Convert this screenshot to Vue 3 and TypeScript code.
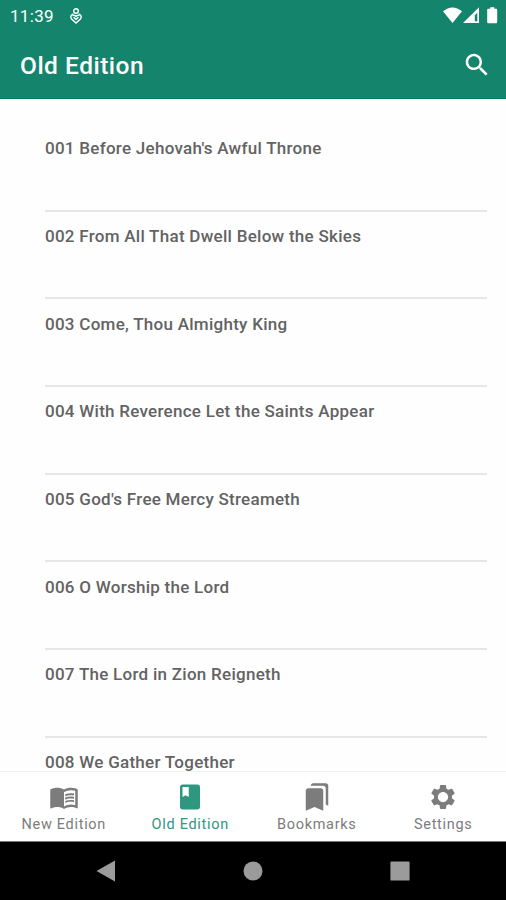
<script setup lang="ts">
import { ref } from 'vue'

interface Hymn {
  number: string
  title: string
}

interface Tab {
  id: string
  label: string
  paths: string[]
}

const hymns: Hymn[] = [
  { number: '001', title: "Before Jehovah's Awful Throne" },
  { number: '002', title: 'From All That Dwell Below the Skies' },
  { number: '003', title: 'Come, Thou Almighty King' },
  { number: '004', title: 'With Reverence Let the Saints Appear' },
  { number: '005', title: "God's Free Mercy Streameth" },
  { number: '006', title: 'O Worship the Lord' },
  { number: '007', title: 'The Lord in Zion Reigneth' },
  { number: '008', title: 'We Gather Together' },
]

const tabs: Tab[] = [
  {
    id: 'new',
    label: 'New Edition',
    paths: [
      'M21 5c-1.11-.35-2.33-.5-3.5-.5-1.95 0-4.05.4-5.5 1.5-1.45-1.1-3.55-1.5-5.5-1.5S2.45 4.9 1 6v14.65c0 .25.25.5.5.5.1 0 .15-.05.25-.05C3.1 20.45 5.05 20 6.5 20c1.95 0 4.05.4 5.5 1.5 1.35-.85 3.8-1.5 5.5-1.5 1.65 0 3.35.3 4.75 1.05.1.05.15.05.25.05.25 0 .5-.25.5-.5V6c-.6-.45-1.25-.75-2-1zm0 13.5c-1.1-.35-2.3-.5-3.5-.5-1.7 0-4.15.65-5.5 1.5V8c1.35-.85 3.8-1.5 5.5-1.5 1.2 0 2.4.15 3.5.5v11.5z',
      'M17.5 10.5c.88 0 1.73.09 2.5.26V9.24c-.79-.15-1.64-.24-2.5-.24-1.7 0-3.24.29-4.5.83v1.66c1.13-.64 2.7-.99 4.5-.99zM13 12.49v1.66c1.13-.64 2.7-.99 4.5-.99.88 0 1.73.09 2.5.26V11.9c-.79-.15-1.64-.24-2.5-.24-1.7 0-3.24.3-4.5.83zM17.5 14.33c-1.7 0-3.24.29-4.5.83v1.66c1.13-.64 2.7-.99 4.5-.99.88 0 1.73.09 2.5.26v-1.52c-.79-.16-1.64-.24-2.5-.24z',
    ],
  },
  {
    id: 'old',
    label: 'Old Edition',
    paths: [
      'M18 2H6C4.9 2 4 2.9 4 4v16c0 1.1.9 2 2 2h12c1.1 0 2-.9 2-2V4c0-1.1-.9-2-2-2zM6 4h5v8l-2.5-1.5L6 12V4z',
    ],
  },
  {
    id: 'bookmarks',
    label: 'Bookmarks',
    paths: ['M19 18l2 1V3c0-1.1-.9-2-2-2H8.99C7.89 1 7 1.9 7 3h10c1.1 0 2 .9 2 2v13zM15 5H5c-1.1 0-2 .9-2 2v16l7-3 7 3V7c0-1.1-.9-2-2-2z'],
  },
  {
    id: 'settings',
    label: 'Settings',
    paths: [
      'M19.14 12.94c.04-.3.06-.61.06-.94 0-.32-.02-.64-.07-.94l2.03-1.58c.18-.14.23-.41.12-.61l-1.92-3.32c-.12-.22-.37-.29-.59-.22l-2.39.96c-.5-.38-1.03-.7-1.62-.94l-.36-2.54c-.04-.24-.24-.41-.48-.41h-3.84c-.24 0-.43.17-.47.41l-.36 2.54c-.59.24-1.13.57-1.62.94l-2.39-.96c-.22-.08-.47 0-.59.22L2.74 8.87c-.12.21-.08.47.12.61l2.03 1.58c-.05.3-.09.63-.09.94s.02.64.07.94l-2.03 1.58c-.18.14-.23.41-.12.61l1.92 3.32c.12.22.37.29.59.22l2.39-.96c.5.38 1.03.7 1.62.94l.36 2.54c.05.24.24.41.48.41h3.84c.24 0 .44-.17.47-.41l.36-2.54c.59-.24 1.13-.56 1.62-.94l2.39.96c.22.08.47 0 .59-.22l1.92-3.32c.12-.22.07-.47-.12-.61l-2.01-1.58zM12 16.1c-2.26 0-4.1-1.84-4.1-4.1s1.84-4.1 4.1-4.1 4.1 1.84 4.1 4.1-1.84 4.1-4.1 4.1z',
    ],
  },
]

const activeTab = ref('old')
</script>

<template>
  <div class="screen">
    <header class="header">
      <div class="status">
        <span class="clock">11:39</span>
        <svg class="notice" viewBox="0 0 12 16" fill="none" stroke="#fff" stroke-width="1.4">
          <circle cx="6" cy="3" r="2.3" />
          <path d="M3.4 5.9C.8 6.5.2 9.3 1.6 11L6 15l4.4-4C11.8 9.3 11.2 6.5 8.6 5.9" />
          <path d="M2.4 7.6Q4.6 6.4 6 8.4Q7.4 6.4 9.6 7.6M3.6 9.2 6 11.4l2.4-2.2" />
        </svg>
        <svg class="signals" viewBox="0 0 56 18" fill="#fff">
          <path d="M0 4.3Q9.5-3.3 19 4.3L9.5 16z" />
          <path fill-rule="evenodd" d="M36 .3V16H20zM34.3 5.8l-2.5 2.4V14.2h2.5z" />
          <path d="M47.2.2h4.2v1.6h1.8q1 0 1 1V15q0 1.2-1 1.2h-8q-1 0-1-1.2V2.8q0-1 1-1h2z" />
        </svg>
      </div>
      <div class="toolbar">
        <h1 class="title">Old Edition</h1>
        <button class="search" aria-label="Search">
          <svg viewBox="0 0 24 24" fill="#fff">
            <path d="M15.5 14h-.79l-.28-.27C15.41 12.59 16 11.11 16 9.5 16 5.91 13.09 3 9.5 3S3 5.91 3 9.5 5.91 16 9.5 16c1.61 0 3.09-.59 4.23-1.57l.27.28v.79l5 4.99L20.49 19l-4.99-5zm-6 0C7.01 14 5 11.99 5 9.5S7.01 5 9.5 5 14 7.01 14 9.5 11.99 14 9.5 14z" />
          </svg>
        </button>
      </div>
    </header>

    <main class="list">
      <div v-for="hymn in hymns" :key="hymn.number" class="row">
        {{ hymn.number }} {{ hymn.title }}
      </div>
    </main>

    <nav class="tabs">
      <button
        v-for="tab in tabs"
        :key="tab.id"
        class="tab"
        :class="{ active: tab.id === activeTab }"
        @click="activeTab = tab.id"
      >
        <svg class="tab-icon" viewBox="0 0 24 24" fill="currentColor">
          <path v-for="d in tab.paths" :key="d" :d="d" />
        </svg>
        <span class="tab-label">{{ tab.label }}</span>
      </button>
    </nav>

    <footer class="system">
      <svg viewBox="0 0 20 22"><path d="M19 .5v21L.5 11z" /></svg>
      <svg viewBox="0 0 20 22"><circle cx="10" cy="11" r="9.5" /></svg>
      <svg viewBox="0 0 20 22"><rect x=".4" y="1.4" width="19.2" height="19.2" rx="1.2" /></svg>
    </footer>
  </div>
</template>

<style>
body {
  margin: 0;
  background: #fff;
}
</style>

<style scoped>
.screen {
  display: flex;
  flex-direction: column;
  width: 506px;
  height: 900px;
  overflow: hidden;
  background: #fefefe;
  font-family: Roboto, sans-serif;
}

button {
  margin: 0;
  padding: 0;
  border: 0;
  background: none;
  font: inherit;
}

.header {
  box-sizing: border-box;
  flex: none;
  height: 99px;
  background: #14856c;
  border-bottom: 1px solid #0d7860;
  color: #fff;
}

.status {
  display: flex;
  align-items: center;
  height: 32px;
  padding: 0 7px 0 10px;
}

.clock {
  width: 44px;
  font-size: 17px;
  letter-spacing: 0.3px;
  line-height: 32px;
}

.notice {
  width: 12px;
  height: 16px;
  margin-left: 16px;
}

.signals {
  width: 56px;
  height: 18px;
  margin-left: auto;
}

.toolbar {
  display: flex;
  align-items: center;
  justify-content: space-between;
  height: 67px;
  padding: 0 14px 0 20px;
}

.title {
  margin: 0;
  font-size: 24.5px;
  font-weight: 500;
  line-height: 67px;
  letter-spacing: 0.5px;
}

.search {
  width: 30px;
  height: 30px;
  margin-top: -2px;
}

.search svg {
  display: block;
  width: 30px;
  height: 30px;
}

.list {
  flex: 1;
  min-height: 0;
  overflow: hidden;
  padding: 25px 19px 0 45px;
}

.row {
  box-sizing: border-box;
  height: 87.67px;
  padding-top: 15.3px;
  border-bottom: 2px solid #e6e6e6;
  color: #636363;
  font-size: 17px;
  font-weight: 500;
  line-height: 18px;
  letter-spacing: 0.27px;
  white-space: nowrap;
}

.row:last-child {
  height: auto;
  border-bottom: 0;
}

.tabs {
  box-sizing: border-box;
  display: grid;
  grid-template-columns: repeat(4, 1fr);
  flex: none;
  height: 70px;
  border-top: 1px solid #f2f2f2;
  background: #fff;
}

.tab {
  display: flex;
  flex-direction: column;
  align-items: center;
  padding: 10px 0 0 1px;
  color: #7c7c7c;
}

.tab.active {
  color: #2f967f;
}

.tab-icon {
  width: 30px;
  height: 30px;
}

.tab-label {
  font-size: 14.5px;
  line-height: 18px;
  letter-spacing: 0.7px;
  margin-top: 4px;
}

.system {
  box-sizing: border-box;
  display: flex;
  align-items: center;
  flex: none;
  gap: 127px;
  height: 59px;
  padding-left: 96px;
  border-top: 1px solid #777;
  background: #000;
}

.system svg {
  width: 20px;
  height: 22px;
  fill: #9b9b9b;
}
</style>
